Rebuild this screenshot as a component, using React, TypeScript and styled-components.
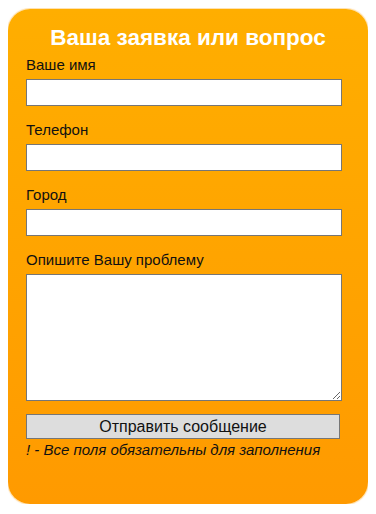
import React from 'react';
import styled, { createGlobalStyle } from 'styled-components';

const GlobalStyle = createGlobalStyle`
  body {
    margin: 8px;
    background: #ffffff;
    font-family: 'Liberation Sans', Arial, sans-serif;
  }
`;

const fields = [
  { label: 'Ваше имя', name: 'name' },
  { label: 'Телефон', name: 'phone' },
  { label: 'Город', name: 'city' },
];

const App = () => {
  return (
    <>
      <GlobalStyle />
      <FormCard>
        <Title>Ваша заявка или вопрос</Title>
        {fields.map((f) => (
          <Field key={f.name}>
            <Label htmlFor={f.name}>{f.label}</Label>
            <TextInput id={f.name} type='text' />
          </Field>
        ))}
        <Field>
          <Label htmlFor='problem'>Опишите Вашу проблему</Label>
          <TextArea id='problem' />
        </Field>
        <SubmitButton type='button'>Отправить сообщение</SubmitButton>
        <Note>! - Все поля обязательны для заполнения</Note>
      </FormCard>
    </>
  );
};

export default App;

const FormCard = styled.form`
  box-sizing: border-box;
  width: 360px;
  height: 495px;
  margin-top: 1px;
  padding: 16px 18px 0 18px;
  border-radius: 22px;
  background: linear-gradient(to bottom, #ffae00 0%, #ff9a00 100%);
  box-shadow: 0 0 1px 1px rgba(255, 200, 110, 0.6);
  display: flex;
  flex-direction: column;
`;

const Title = styled.h2`
  margin: 0 0 6px 0;
  font-size: 22.5px;
  font-weight: bold;
  color: #ffffff;
  text-align: center;
  line-height: 25px;
`;

const Field = styled.div`
  display: flex;
  flex-direction: column;
  margin-bottom: 15px;
  &:nth-of-type(4) {
    margin-bottom: 13px;
  }
`;

const Label = styled.label`
  font-size: 15px;
  line-height: 17px;
  color: #111;
  margin-bottom: 6px;
`;

const TextInput = styled.input`
  box-sizing: border-box;
  width: 316px;
  height: 27px;
  margin: 0;
  border: 1px solid #767676;
  background: #fff;
  padding: 2px 4px;
  font-size: 14px;
`;

const TextArea = styled.textarea`
  box-sizing: border-box;
  width: 316px;
  height: 127px;
  margin: 0;
  border: 1px solid #767676;
  background: #fff;
  font-family: 'Liberation Sans', Arial, sans-serif;
`;

const SubmitButton = styled.button`
  box-sizing: border-box;
  width: 314px;
  height: 25px;
  margin: 0 0 2px 0;
  padding: 0;
  border: 1px solid #767676;
  background: #dddddd;
  font-family: 'Liberation Sans', Arial, sans-serif;
  font-size: 16px;
  color: #111;
`;

const Note = styled.p`
  margin: 0;
  font-size: 15px;
  line-height: 17px;
  font-style: italic;
  color: #111;
`;
